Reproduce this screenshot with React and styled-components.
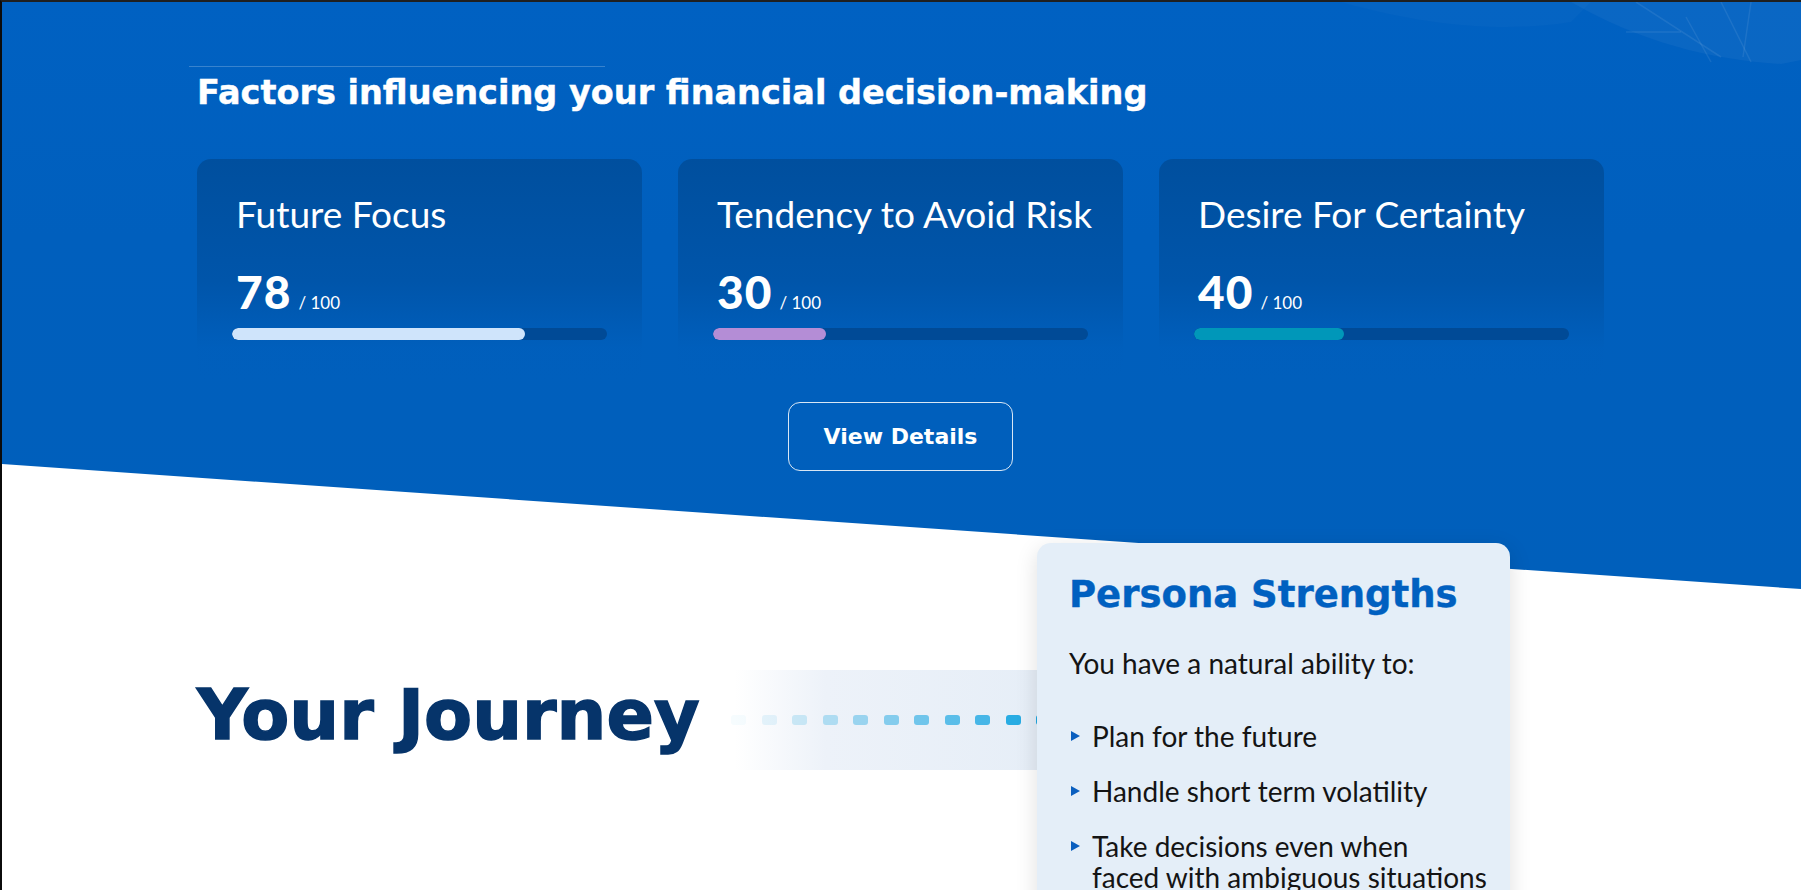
import styled, { createGlobalStyle } from "styled-components";

const GlobalStyle = createGlobalStyle`
  html, body {
    margin: 0;
    padding: 0;
    overflow: hidden;
    background: #ffffff;
  }
  * {
    box-sizing: border-box;
  }
`;

const boldFont = `"DejaVu Sans", "Lato", sans-serif`;

const Page = styled.div`
  position: relative;
  width: 1801px;
  height: 890px;
  overflow: hidden;
  font-family: "Lato", "Liberation Sans", sans-serif;
  border-top: 2px solid #1f1f1f;
  border-left: 2px solid #0b0b0b;
`;

const Hero = styled.section`
  position: relative;
  height: 587px;
  padding-top: 64px;
  background: linear-gradient(180deg, #0061c2 0%, #005fbd 40%, #005fbb 100%);
  clip-path: polygon(0 0, 100% 0, 100% 587px, 0 462px);
`;

const Deco = styled.svg`
  position: absolute;
  top: 0;
  right: 0;
  pointer-events: none;
`;

const Inner = styled.div`
  width: 1407px;
  margin: 0 0 0 195px;
`;

const Rule = styled.div`
  width: 416px;
  height: 1px;
  margin-left: -8px;
  background: rgba(255, 255, 255, 0.22);
`;

const Heading = styled.h2`
  margin: 6px 0 0;
  font-family: ${boldFont};
  font-size: 33.5px;
  font-weight: 700;
  line-height: 40px;
  color: #ffffff;
  -webkit-text-stroke: 0.4px #ffffff;
`;

const Cards = styled.div`
  display: grid;
  grid-template-columns: repeat(3, 445px);
  column-gap: 36px;
  margin-top: 46px;
`;

const Card = styled.div`
  height: 222px;
  padding: 33px 35px 0;
  border-radius: 14px;
  background: linear-gradient(
    180deg,
    #004f9e 0%,
    #0055aa 55%,
    rgba(0, 94, 187, 0.4) 85%,
    rgba(0, 95, 189, 0) 100%
  );
`;

const CardTitle = styled.div`
  padding-left: 4px;
  font-size: 37px;
  font-weight: 400;
  line-height: 44px;
  color: #ffffff;
  white-space: nowrap;
`;

const Score = styled.div`
  display: flex;
  align-items: baseline;
  gap: 7px;
  margin-top: 33px;
  padding-left: 4px;
  color: #ffffff;
`;

const ScoreValue = styled.span`
  font-size: 46px;
  font-weight: 900;
  line-height: 1;
  letter-spacing: 1px;
`;

const ScoreMax = styled.span`
  font-size: 17px;
  font-weight: 400;
  line-height: 1;
`;

const Track = styled.div`
  height: 12px;
  margin-top: 13px;
  border-radius: 6px;
  background: #004a96;
  overflow: hidden;
`;

const Fill = styled.div`
  height: 100%;
  border-radius: 6px;
  background: ${(p) => p.$color};
`;

const ButtonRow = styled.div`
  display: flex;
  justify-content: center;
  margin-top: 21px;
`;

const DetailsButton = styled.button`
  width: 225px;
  height: 69px;
  border: 1px solid rgba(255, 255, 255, 0.85);
  border-radius: 12px;
  background: transparent;
  color: #ffffff;
  font-family: ${boldFont};
  font-size: 22px;
  font-weight: 700;
  cursor: pointer;
`;

const Journey = styled.section`
  position: relative;
  z-index: 1;
  display: flex;
  align-items: flex-start;
  margin: -46px 0 0 195px;
`;

const JourneyHead = styled.div`
  display: flex;
  align-items: center;
  margin-top: 122px;
`;

const JourneyTitle = styled.h1`
  margin: 0 0 10px;
  width: 538px;
  font-family: ${boldFont};
  font-size: 70px;
  font-weight: 700;
  line-height: 100px;
  color: #06346a;
  -webkit-text-stroke: 1.5px #06346a;
`;

const Band = styled.div`
  display: flex;
  align-items: center;
  gap: 15.5px;
  width: 302px;
  height: 100px;
  background: linear-gradient(90deg, rgba(232, 239, 248, 0) 0%, #edf2f9 30%, #e6eef7 100%);

  & > span:first-child {
    margin-left: -4px;
  }
`;

const Dot = styled.span`
  flex: none;
  width: 15px;
  height: 10px;
  border-radius: 3px;
  background: rgba(30, 168, 226, ${(p) => p.$alpha});
`;

const Persona = styled.div`
  position: relative;
  z-index: 2;
  flex: none;
  width: 473px;
  height: 420px;
  padding: 26px 18px 0 32px;
  border-radius: 14px;
  background: #e4eef8;
  box-shadow: 0 6px 22px rgba(0, 0, 0, 0.13);
`;

const PersonaTitle = styled.h3`
  margin: 0;
  font-family: ${boldFont};
  font-size: 37px;
  font-weight: 700;
  line-height: 52px;
  color: #0060c0;
  -webkit-text-stroke: 0.4px #0060c0;
`;

const Lead = styled.p`
  margin: 25px 0 0;
  font-size: 28px;
  line-height: 34px;
  color: #141414;
`;

const List = styled.ul`
  margin: 41px 0 0;
  padding: 0;
  list-style: none;
`;

const Item = styled.li`
  position: relative;
  padding-left: 23px;
  margin-bottom: 24px;
  font-size: 28px;
  line-height: 31px;
  color: #141414;
  white-space: pre-line;

  &::before {
    content: "";
    position: absolute;
    left: 2px;
    top: 10px;
    border-left: 9px solid #0a5fbf;
    border-top: 5px solid transparent;
    border-bottom: 5px solid transparent;
  }
`;

const factors = [
  { title: "Future Focus", value: 78, color: "#cfe4fb" },
  { title: "Tendency to Avoid Risk", value: 30, color: "#b48dd6" },
  { title: "Desire For Certainty", value: 40, color: "#0097b9" },
];

const strengths = [
  "Plan for the future",
  "Handle short term volatility",
  "Take decisions even when\nfaced with ambiguous situations",
];

const dots = [0.04, 0.1, 0.2, 0.3, 0.4, 0.5, 0.6, 0.7, 0.8, 0.95, 1];

export default function App() {
  return (
    <>
      <GlobalStyle />
      <Page>
        <Hero>
          <Deco width="520" height="120" viewBox="0 0 520 120">
            <path
              d="M60 0 C150 26 230 30 290 20 L310 0 Z"
              fill="rgba(255,255,255,0.02)"
            />
            <path
              d="M290 0 C360 40 430 58 500 62 L520 58 L520 0 Z"
              fill="rgba(255,255,255,0.04)"
            />
            <g stroke="rgba(255,255,255,0.08)" strokeWidth="1.5" fill="none">
              <line x1="355" y1="0" x2="440" y2="55" />
              <line x1="405" y1="15" x2="430" y2="60" />
              <line x1="345" y1="30" x2="400" y2="30" />
              <line x1="440" y1="0" x2="470" y2="60" />
              <line x1="470" y1="0" x2="462" y2="55" />
            </g>
          </Deco>
          <Inner>
            <Rule />
            <Heading>Factors influencing your financial decision-making</Heading>
            <Cards>
              {factors.map((f) => (
                <Card key={f.title}>
                  <CardTitle>{f.title}</CardTitle>
                  <Score>
                    <ScoreValue>{f.value}</ScoreValue>
                    <ScoreMax>/ 100</ScoreMax>
                  </Score>
                  <Track>
                    <Fill $color={f.color} style={{ width: `${f.value}%` }} />
                  </Track>
                </Card>
              ))}
            </Cards>
            <ButtonRow>
              <DetailsButton>View Details</DetailsButton>
            </ButtonRow>
          </Inner>
        </Hero>
        <Journey>
          <JourneyHead>
            <JourneyTitle>Your Journey</JourneyTitle>
            <Band>
              {dots.map((a, i) => (
                <Dot key={i} $alpha={a} />
              ))}
            </Band>
          </JourneyHead>
          <Persona>
            <PersonaTitle>Persona Strengths</PersonaTitle>
            <Lead>You have a natural ability to:</Lead>
            <List>
              {strengths.map((s) => (
                <Item key={s}>{s}</Item>
              ))}
            </List>
          </Persona>
        </Journey>
      </Page>
    </>
  );
}
